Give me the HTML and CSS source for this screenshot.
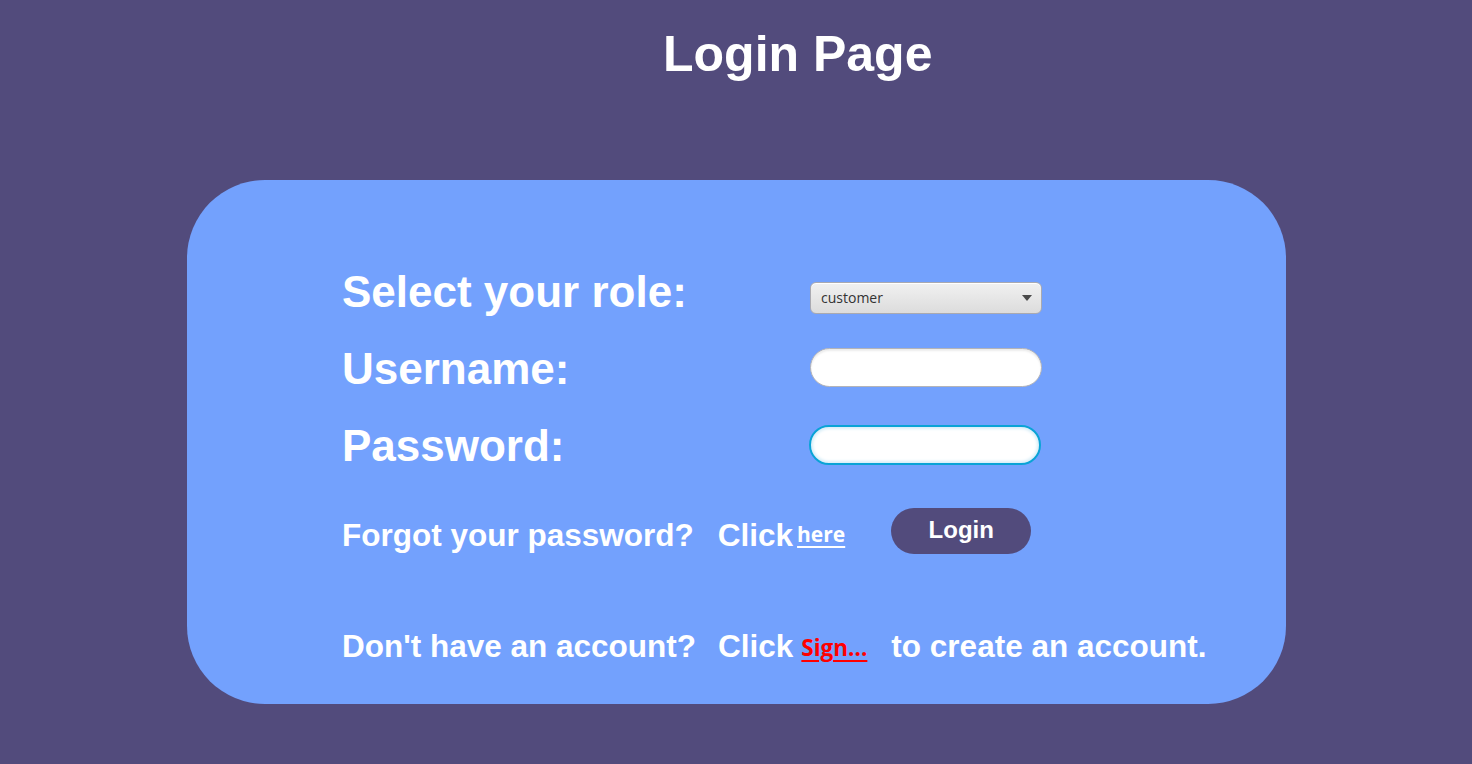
FILE: index.html
```html
<!DOCTYPE html>
<html>
<head>
<meta charset="utf-8">
<title>Login Page</title>
<link rel="stylesheet" href="styles.css">
</head>
<body>
<div class="page">
  <h1 class="title">Login Page</h1>
  <div class="card">
    <div class="row">
      <span class="label">Select your role:</span>
      <div class="select">
        <span class="select-text">customer</span>
        <svg class="arrow" width="10" height="6" viewBox="0 0 10 6"><path d="M0 0 H10 L5 6 Z" fill="#4a4a4a"/></svg>
      </div>
    </div>
    <div class="row">
      <span class="label">Username:</span>
      <div class="input"></div>
    </div>
    <div class="row">
      <span class="label">Password:</span>
      <div class="input focused"></div>
    </div>
    <div class="row-small forgot">
      <span class="text">Forgot your password?</span>
      <span class="text click">Click</span>
      <a class="link-here" href="#">here</a>
      <button class="login-btn">Login</button>
    </div>
    <div class="row-small signup">
      <span class="text">Don't have an account?</span>
      <span class="text click">Click</span>
      <a class="link-sign" href="#">Sign...</a>
      <span class="text">to create an account.</span>
    </div>
  </div>
</div>
</body>
</html>
```

FILE: styles.css
```css
html, body {
  margin: 0;
  padding: 0;
  background: #524b7c;
  width: 1472px;
  height: 764px;
  overflow: hidden;
  font-family: "Liberation Sans", Arial, sans-serif;
  color: #ffffff;
}

.page {
  padding-top: 27px;
}

.title {
  margin: 0 0 0 663px;
  font-size: 50px;
  font-weight: bold;
  line-height: 54px;
  height: 54px;
}

.card {
  margin: 99px 0 0 187px;
  width: 1099px;
  height: 524px;
  box-sizing: border-box;
  background: #73a1fd;
  border-radius: 78px;
  padding: 72px 0 0 155px;
}

.row {
  display: flex;
  align-items: center;
  height: 77px;
}

.label {
  width: 468px;
  font-size: 44px;
  font-weight: bold;
  line-height: 44px;
  padding-top: 2px;
}

.select {
  width: 232px;
  height: 32px;
  box-sizing: border-box;
  margin-top: 14px;
  border: 1px solid #a9a9b0;
  border-radius: 6px;
  background: linear-gradient(#f1f1f1, #dcdcdc);
  box-shadow: inset 0 1px 0 #ffffff;
  display: flex;
  align-items: center;
  padding: 0 9px 0 10px;
}

.select-text {
  flex: 1;
  color: #333333;
  font-family: "Open Sans", "DejaVu Sans", sans-serif;
  font-size: 14px;
}

.input {
  width: 232px;
  height: 39px;
  box-sizing: border-box;
  border: 1px solid #b4b4b8;
  border-radius: 20px;
  background: #ffffff;
  box-shadow: inset 0 2px 2px rgba(0,0,0,0.08);
}

.input.focused {
  margin-left: -1px;
  height: 40px;
  border: 2px solid #0aa3d6;
  box-shadow: inset 0 0 3px 2px #d8eef8;
}

.row-small {
  display: flex;
  align-items: center;
}

.forgot {
  margin-top: 25px;
  height: 46px;
}

.signup {
  margin-top: 68px;
  height: 40px;
}

.text {
  font-size: 31.5px;
  font-weight: bold;
  line-height: 32px;
  padding-top: 8px;
}

.click {
  margin-left: 24px;
}

.signup .click {
  margin-left: 22px;
}

.link-here {
  color: #ffffff;
  font-family: "Open Sans", "DejaVu Sans", sans-serif;
  font-weight: bold;
  font-size: 21px;
  text-decoration: underline;
  text-decoration-thickness: 2px;
  text-underline-offset: 4px;
  margin-left: 4px;
  padding-top: 6px;
}

.link-sign {
  color: #ff0000;
  font-family: "Open Sans", "DejaVu Sans", sans-serif;
  font-weight: bold;
  font-size: 22.5px;
  text-decoration: underline;
  text-decoration-thickness: 2px;
  text-underline-offset: 4px;
  margin: 0 24px 0 8px;
  padding-top: 10px;
}

.login-btn {
  margin-left: 46px;
  width: 140px;
  height: 46px;
  border: none;
  border-radius: 23px;
  background: #524b7c;
  color: #ffffff;
  font-family: "Liberation Sans", Arial, sans-serif;
  font-weight: bold;
  font-size: 24px;
  padding: 0 0 2px 0;
}
```
